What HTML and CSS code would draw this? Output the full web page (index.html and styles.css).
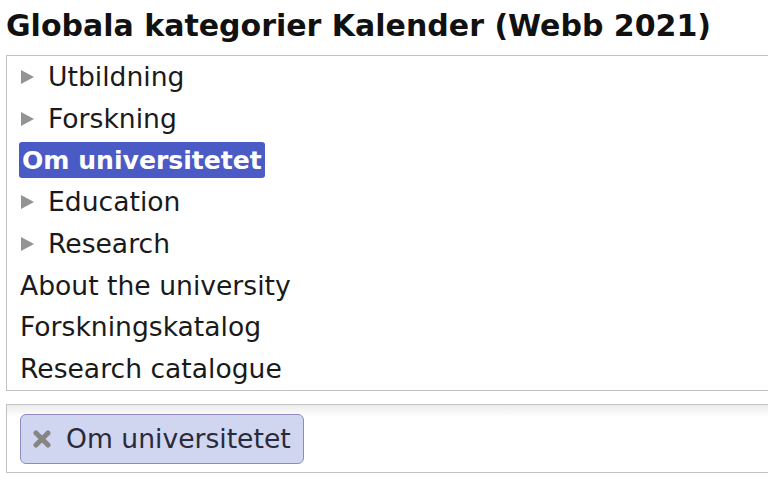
FILE: index.html
```html
<!DOCTYPE html>
<html lang="sv">
<head>
<meta charset="utf-8">
<title>Globala kategorier</title>
<link rel="stylesheet" href="styles.css">
</head>
<body>
<h1 class="title">Globala kategorier Kalender (Webb 2021)</h1>
<ul class="tree">
  <li class="row parent"><span class="arrow"></span><span class="label">Utbildning</span></li>
  <li class="row parent"><span class="arrow"></span><span class="label">Forskning</span></li>
  <li class="row"><span class="label selected">Om universitetet</span></li>
  <li class="row parent"><span class="arrow"></span><span class="label">Education</span></li>
  <li class="row parent"><span class="arrow"></span><span class="label">Research</span></li>
  <li class="row"><span class="label">About the university</span></li>
  <li class="row"><span class="label">Forskningskatalog</span></li>
  <li class="row"><span class="label">Research catalogue</span></li>
</ul>
<div class="chosen">
  <span class="tag">
    <svg class="tag-x" width="18" height="18" viewBox="0 0 18 18" aria-hidden="true"><path d="M3 3L15 15M15 3L3 15" stroke="#858585" stroke-width="5" stroke-linecap="round"/></svg>
    <span class="tag-text">Om universitetet</span>
  </span>
</div>
</body>
</html>
```
FILE: styles.css
```css
html {
  overflow: hidden;
  background: #fff;
}
body {
  margin: 0;
  padding: 8px 0 0 6px;
  font-family: "DejaVu Sans", Verdana, sans-serif;
  color: #1a1a1a;
}
.title {
  margin: 0 0 12px 0;
  font-size: 30px;
  font-weight: bold;
  line-height: 35px;
  color: #111;
}
.tree {
  list-style: none;
  margin: 0;
  padding: 0;
  width: 800px;
  border: 1px solid #c2c2c2;
  font-size: 26.6px;
}
.row {
  display: flex;
  align-items: center;
  height: 41.7px;
  padding-left: 13px;
}
.arrow {
  width: 0;
  height: 0;
  border-top: 7px solid transparent;
  border-bottom: 7px solid transparent;
  border-left: 13px solid #939393;
  margin-left: 1px;
  margin-right: 14px;
}
.label {
  line-height: 31px;
}
.selected {
  background: #4b5bc6;
  color: #fff;
  font-weight: bold;
  font-size: 25.1px;
  border-radius: 3px;
  padding: 3px 3px 2px 3px;
  margin-left: -1px;
}
.chosen {
  margin-top: 13px;
  width: 800px;
  height: 69px;
  border: 1px solid #c2c2c2;
  background: linear-gradient(#ececec, #ffffff 12px);
  padding: 9px 0 0 13px;
  box-sizing: border-box;
}
.tag {
  display: inline-flex;
  align-items: center;
  height: 50px;
  box-sizing: border-box;
  padding: 0 12px 0 12px;
  background: #d0d5f0;
  border: 1px solid #9189c4;
  border-radius: 6px;
  font-size: 26.6px;
  color: #2a2a3a;
}
.tag-x {
  margin-right: 15px;
}
```
